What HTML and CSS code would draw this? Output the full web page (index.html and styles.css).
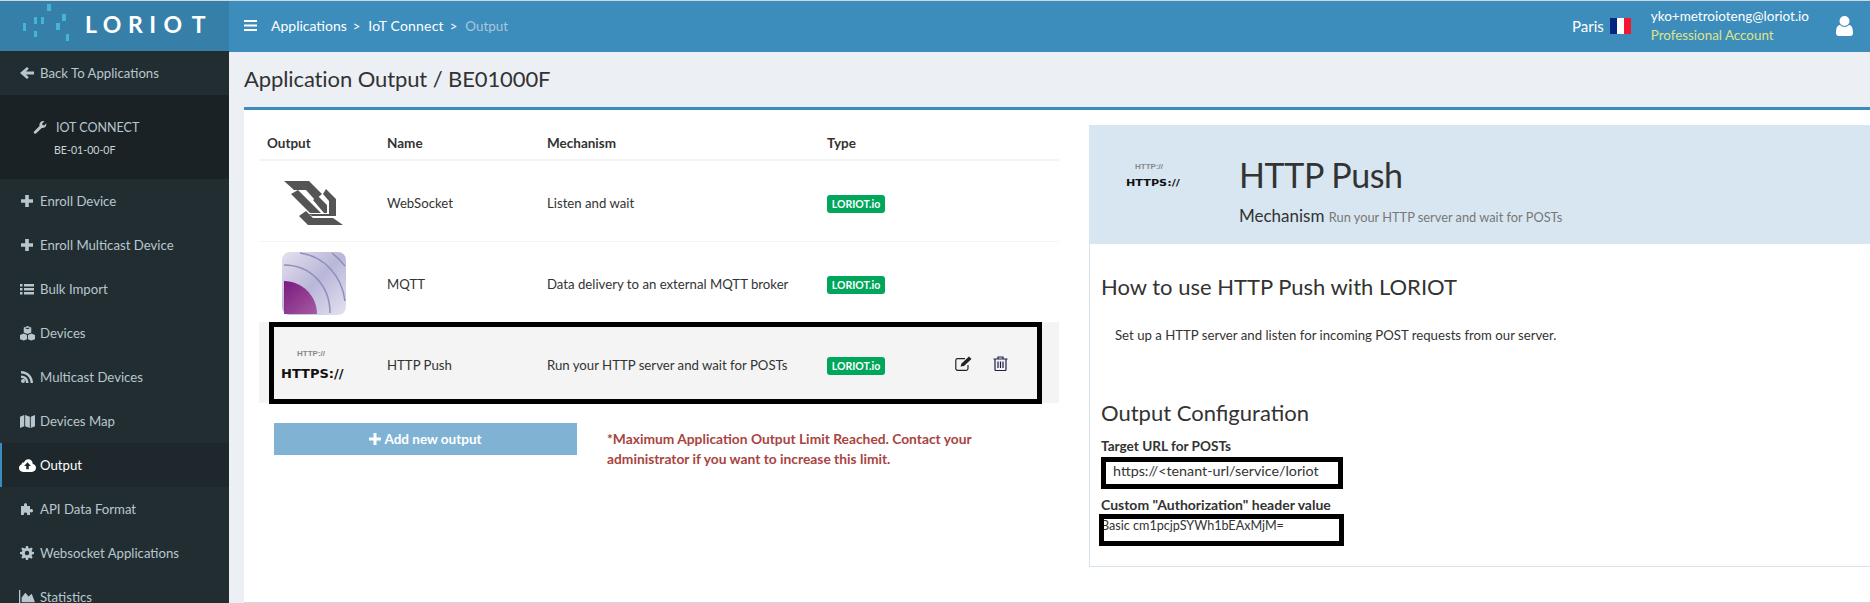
FILE: index.html
```html
<!DOCTYPE html>
<html lang="en">
<head>
	<meta charset="UTF-8">
	<title>Application Output</title>
	<link rel="stylesheet" href="styles.css">
</head>
<body>
	<header class="topbar">
		<div class="logo">
			<svg class="logo-dots" width="60" height="44" viewBox="0 0 60 44">
				<rect x="1" y="20" width="3" height="8" />
				<rect x="12" y="14" width="3" height="7" />
				<rect x="19" y="14" width="3" height="7" />
				<rect x="25" y="1" width="4" height="7" />
				<rect x="12" y="28" width="3" height="6" />
				<rect x="34" y="20" width="4" height="7" />
				<rect x="40" y="11" width="4" height="7" />
				<rect x="44" y="31" width="3" height="7" />
			</svg>
			<span class="logo-text">LORI<i>O</i><i class="logo-t">T</i></span>
		</div>
		<div class="topbar-main">
			<svg class="burger" width="13" height="11" viewBox="0 0 13 11"><path d="M0 0h13v2H0zM0 4.500h13v2H0zM0 9h13v2H0z" /></svg>
			<nav class="crumbs">
				<span>Applications</span><b>&gt;</b>
				<span class="crumb-mid">IoT Connect</span><b>&gt;</b>
				<span class="crumb-now">Output</span>
			</nav>
			<div class="region">Paris
				<svg width="21" height="16" viewBox="0 0 21 16"><rect width="7" height="16" fill="#00267f" /><rect x="7" width="7" height="16" fill="#fff" /><rect x="14" width="7" height="16" fill="#f31830" /></svg>
			</div>
			<div class="account">
				<div>yko+metroioteng@loriot.io</div>
				<div class="plan">Professional Account</div>
			</div>
			<svg class="user" width="17" height="20" viewBox="0 0 17 20"><circle cx="8.500" cy="5" r="5" /><path d="M0 17c0-6 2-8 4-8 1 1 3 2 4.500 2s3.500-1 4.500-2c2 0 4 2 4 8 0 2-1 3-3 3H3c-2 0-3-1-3-3z" /></svg>
		</div>
	</header>

	<div class="layout">
		<aside class="sidebar">
			<a class="side-back">
				<svg class="ico" viewBox="0 0 14 14"><path d="M7 1l1.800 1.800L6 5.500h8v3H6l2.800 2.700L7 13 0 7z" /></svg>
				Back To Applications
			</a>
			<div class="side-app">
				<div class="app-name">
					<svg width="14" height="14" viewBox="0 0 14 14"><path d="M1 11.500L6.500 6C6 3.500 7.500 1 10.500 1l.9.200L9.200 3.500l.3 1.600 1.600.4 2.200-2.200c.5 3-1.500 5-4.500 4.700L3 13.500c-1 .8-3-1-2-2z" /></svg>
					IOT CONNECT
				</div>
				<div class="app-id">BE-01-00-0F</div>
			</div>
			<a class="side-item">
				<svg class="ico" viewBox="0 0 14 14"><path d="M5.200 1h3.600v4.200H13v3.600H8.800V13H5.200V8.800H1V5.200h4.200z" /></svg>
				Enroll Device
			</a>
			<a class="side-item">
				<svg class="ico" viewBox="0 0 14 14"><path d="M5.200 1h3.600v4.200H13v3.600H8.800V13H5.200V8.800H1V5.200h4.200z" /></svg>
				Enroll Multicast Device
			</a>
			<a class="side-item">
				<svg class="ico" viewBox="0 0 14 14"><path d="M0 2h2.500v2.500H0zM4 2h10v2.500H4zM0 6h2.500v2.500H0zM4 6h10v2.500H4zM0 10h2.500v2.500H0zM4 10h10v2.500H4z" /></svg>
				Bulk Import
			</a>
			<a class="side-item">
				<svg class="ico ico-wide" viewBox="0 0 18 16"><path fill-rule="evenodd" d="M9 0l4 1.500V7L9 8.500 5 7V1.500zM9 2.200L7 1.500l-.3 1L9 3.400l2.300-.9-.3-1zM5 8l3.500 1.500V14L5 15.500 1 14V9.500zM13 8l4 1.500V14l-4 1.500L9.500 14V9.500z" /></svg>
				Devices
			</a>
			<a class="side-item">
				<svg class="ico" viewBox="0 0 14 14"><circle cx="3" cy="11" r="2" /><path d="M1 5.500c4.500 0 7.500 3 7.500 7.500H6c0-3-2-5-5-5zM1 1c7 0 12 5 12 12h-2.500C10.500 7.500 6.500 3.500 1 3.500z" /></svg>
				Multicast Devices
			</a>
			<a class="side-item">
				<svg class="ico ico-wide" viewBox="0 0 16 16"><path d="M0 3l4.500-2v12L0 15zM5.500 1l5 2v12l-5-2zM11.500 3L16 1v12l-4.500 2z" /></svg>
				Devices Map
			</a>
			<a class="side-item is-active">
				<svg class="ico ico-wide" viewBox="0 0 16 14"><path fill-rule="evenodd" d="M4 13C1.500 13 0 11.300 0 9.300 0 7.700 1 6.500 2.300 6 2.500 4.800 3.500 4 4.800 4 5.600 2 7 1 8.800 1c2.500 0 4.200 2 4.200 4.500 1.800.4 3 1.800 3 3.600 0 2.200-1.700 3.900-4 3.900zM8 4L4.800 7.500h2v3h2.400v-3h2z" /></svg>
				Output
			</a>
			<a class="side-item">
				<svg class="ico" viewBox="0 0 14 14"><path d="M4 4V2.500C4 .8 7 .8 7 2.500V4h3v3.500c1.500-.8 3-.3 3 1.300s-1.500 2-3 1.200V13H7c.6-1.500-.3-2.500-1.500-2.500S3.400 11.500 4 13H1V4z" /></svg>
				API Data Format
			</a>
			<a class="side-item">
				<svg class="ico" viewBox="0 0 14 14"><path fill-rule="evenodd" d="M6 0h2l.4 2 1.300.5L11.400 1.400 12.800 2.800 11.600 4.500l.5 1.300 1.900.3v2l-1.900.4-.5 1.200 1.100 1.700-1.400 1.400-1.700-1.100-1.200.5L8 14H6l-.4-1.800-1.200-.5-1.700 1.100-1.400-1.400 1.100-1.700-.5-1.200L0 8.100v-2l1.900-.3.500-1.300-1.200-1.700 1.400-1.400 1.700 1.100 1.300-.5zM7 4.800a2.200 2.200 0 1 0 0 4.400 2.200 2.200 0 0 0 0-4.400z" /></svg>
				Websocket Applications
			</a>
			<a class="side-item">
				<svg class="ico ico-wide" viewBox="0 0 16 14"><path d="M0 0h1.200v12.800H16V14H0zM2.500 11.500V7L6 2.500 9 6l3-2.500 3 8z" /></svg>
				Statistics
			</a>
		</aside>

		<main class="content">
			<h1 class="page-title">Application Output / BE01000F</h1>
			<section class="out-box">
				<div class="out-left">
					<table class="out-table">
						<thead>
							<tr>
								<th class="col-output">Output</th>
								<th class="col-name">Name</th>
								<th class="col-mech">Mechanism</th>
								<th class="col-type">Type</th>
								<th></th>
							</tr>
						</thead>
						<tbody>
							<tr>
								<td>
									<svg class="ws-logo" width="60" height="46" viewBox="8 9 60 46">
										<path d="M8 10h25l13 13-7 6-9-10H18zM15 23l7-4 23 23H34zM37 29l5-4 9 9v8h-3zM50 18l10 10v17H36l-3-2h20V30l-6-7zM23 45l7-5 7 7h20l10 7H32z" />
									</svg>
								</td>
								<td>WebSocket</td>
								<td>Listen and wait</td>
								<td><span class="badge">LORIOT.io</span></td>
								<td></td>
							</tr>
							<tr>
								<td>
									<svg class="mqtt-logo" width="64" height="63" viewBox="0 0 64 63">
										<defs>
											<linearGradient id="mqttBg" x1="0" y1="0" x2="1" y2="1">
												<stop offset="0" stop-color="#e6e0ef" />
												<stop offset="0.5" stop-color="#b9b7d8" />
												<stop offset="1" stop-color="#e4e2f0" />
											</linearGradient>
											<linearGradient id="mqttDot" x1="0" y1="0" x2="1" y2="1">
												<stop offset="0" stop-color="#7a1a80" />
												<stop offset="1" stop-color="#a65aa0" />
											</linearGradient>
										</defs>
										<rect width="64" height="63" rx="8" fill="url(#mqttBg)" />
										<path d="M2 29c18 0 33 15 33 33H2z" fill="url(#mqttDot)" />
										<path d="M2 13c27 0 46 21 46 48M18 1c24 3 42 23 45 48M50 1c4 3 9 8 13 13" fill="none" stroke="#8e8fbd" stroke-width="1.500" />
									</svg>
								</td>
								<td>MQTT</td>
								<td>Data delivery to an external MQTT broker</td>
								<td><span class="badge">LORIOT.io</span></td>
								<td></td>
							</tr>
							<tr class="row-on">
								<td>
									<div class="http-logo">
										<div class="http-small">HTTP://</div>
										<div class="http-big">HTTPS://</div>
									</div>
								</td>
								<td>HTTP Push</td>
								<td>Run your HTTP server and wait for POSTs</td>
								<td><span class="badge">LORIOT.io</span></td>
								<td class="row-tools">
									<svg width="19" height="15" viewBox="0 0 19 15" fill="none" stroke="#222" stroke-width="1.200"><path d="M13 9v3.500a1.800 1.800 0 0 1-1.800 1.800H2.600A1.800 1.800 0 0 1 .8 12.500V4.400a1.800 1.800 0 0 1 1.800-1.800H10" /><path d="M5.500 10.500l1-3L14 .5l2.500 2.500-7.500 7z" fill="#222" stroke="none" /></svg>
									<svg width="15" height="15" viewBox="0 0 15 15" fill="none" stroke="#1d1d4a" stroke-width="1.200"><path d="M.5 3h14M5 3V1h5v2M2 3v10.500c0 .6.400 1 1 1h9c.6 0 1-.4 1-1V3M5 5.500v6.500M7.500 5.500v6.500M10 5.500v6.500" /></svg>
								</td>
							</tr>
						</tbody>
					</table>
					<div class="mark-row"></div>
					<div class="out-actions">
						<a class="btn-add">
							<svg width="12" height="12" viewBox="0 0 12 12"><path d="M4.500 0h3v4.500H12v3H7.500V12h-3V7.500H0v-3h4.500z" /></svg>
							Add new output
						</a>
						<p class="limit-note">*Maximum Application Output Limit Reached. Contact your administrator if you want to increase this limit.</p>
					</div>
				</div>

				<div class="out-panel">
					<div class="panel-head">
						<div class="panel-logo">
							<div class="http-small">HTTP://</div>
							<div class="http-big">HTTPS://</div>
						</div>
						<div>
							<h2>HTTP Push</h2>
							<p class="panel-mech">Mechanism <small>Run your HTTP server and wait for POSTs</small></p>
						</div>
					</div>
					<div class="panel-body">
						<h3>How to use HTTP Push with LORIOT</h3>
						<p class="panel-text">Set up a HTTP server and listen for incoming POST requests from our server.</p>
						<h3 class="conf-title">Output Configuration</h3>
						<label>Target URL for POSTs</label>
						<div class="field field-url">https://&lt;tenant-url/service/loriot</div>
						<label class="label-auth">Custom "Authorization" header value</label>
						<div class="field field-auth"><span>Basic cm1pcjpSYWh1bEAxMjM=</span></div>
					</div>
				</div>
			</section>
		</main>
	</div>
</body>
</html>
```

FILE: styles.css
```css
body{ margin: 0; height: 603px; overflow: hidden; background: #ecf0f5; color: #333; font-family: "Lato", "Liberation Sans", sans-serif; font-size: 13.200px; border-top: 1px solid #d2d6de; box-sizing: border-box; }
h1,h2,h3,p{ margin: 0; font-weight: normal; }

/* top bar */
.topbar{ display: flex; height: 51px; background: #3c8dbc; color: #fff; }
.logo{ width: 229px; background: #367fa9; display: flex; align-items: flex-start; flex-shrink: 0; }
.logo-dots{ margin: 2px 0 0 22px; fill: #45b5d6; }
.logo-text{ font-size: 23px; font-weight: bold; letter-spacing: 6.500px; margin: 7px 0 0 3px; line-height: 32px; white-space: nowrap; }
.logo-text i{ font-style: normal; margin-left: 1px; }
.logo-text .logo-t{ margin-left: 3px; }
.topbar-main{ flex: 1; display: flex; align-items: center; padding: 0 17px 2px 15px; }
.burger{ fill: #fff; margin-right: 14px; }
.crumbs{ flex: 1; display: flex; align-items: center; font-size: 14px; }
.crumbs b{ font-weight: normal; margin: 0 8px 0 6px; font-size: 13px; }
.crumb-mid{ letter-spacing: .2px; }
.crumb-now{ color: #a9c6db; font-size: 13.400px; }
.region{ display: flex; align-items: center; gap: 6px; font-size: 15px; margin-right: 20px; }
.account{ font-size: 13.500px; line-height: 19px; margin-right: 27px; }
.plan{ color: #dfe38a; font-size: 13.400px; }
.user{ fill: #fff; }

/* sidebar */
.layout{ display: flex; height: 551px; }
.sidebar{ width: 229px; flex-shrink: 0; background: #222d32; color: #b8c7ce; overflow: hidden; margin-top: -1px; }
.side-back{ display: flex; align-items: center; height: 44px; gap: 6px; padding-left: 20px; }
.side-item{ display: flex; align-items: center; height: 44px; gap: 6px; padding-left: 20px; }
.side-item.is-active{ background: #1e282c; color: #fff; border-left: 2px solid #3c8dbc; padding-left: 18px; }
.ico{ width: 14px; height: 14px; fill: currentColor; flex-shrink: 0; }
.ico-wide{ width: 17px; height: 15px; margin: 0 -1.500px; }
.side-app{ background: #1a2226; height: 84px; box-sizing: border-box; padding-top: 21px; }
.app-name{ display: flex; align-items: center; gap: 9px; padding-left: 33px; height: 22px; font-size: 12.500px; }
.app-name svg{ fill: #b8c7ce; }
.app-id{ font-size: 10.600px; color: #c8d4da; padding: 6px 0 0 54px; }

/* content */
.content{ flex: 1; min-width: 0; padding-left: 15px; }
.page-title{ font-size: 22px; letter-spacing: -.1px; color: #333; height: 55px; line-height: 53px; }
.out-box{ display: flex; background: #fff; border-top: 3px solid #3c8dbc; border-bottom: 1px solid #d2d6de; height: 496px; box-sizing: border-box; padding-top: 15px; }
.out-left{ width: 800px; margin: 0 30px 0 15px; flex-shrink: 0; position: relative; }
.out-table{ width: 800px; border-collapse: collapse; table-layout: fixed; }
.out-table th{ text-align: left; font-weight: bold; height: 32px; padding: 2px 8px 0; border-bottom: 2px solid #f4f4f4; font-size: 13.500px; }
.out-table td{ height: 81px; padding: 4px 8px 0; border-top: 1px solid #f4f4f4; vertical-align: middle; box-sizing: border-box; }
.out-table tbody tr:first-child td{ border-top: 0; }
.col-output{ width: 104px; }
.col-name{ width: 144px; }
.col-mech{ width: 264px; }
.col-type{ width: 112px; }
.ws-logo{ display: block; margin-left: 17px; fill: #555; }
.mqtt-logo{ display: block; margin-left: 15px; }
.row-on td{ background: #f4f4f4; }
.http-logo{ margin-left: 14px; width: 60px; text-align: center; padding-top: 1px; }
.http-small{ font-size: 8px; font-weight: bold; color: #888; font-family: "Liberation Sans", sans-serif; }
.http-big{ font-size: 13px; font-weight: bold; color: #111; font-family: "DejaVu Sans", sans-serif; margin-top: 8px; }
.badge{ display: inline-block; background: #00a65a; color: #fff; font-size: 10.500px; font-weight: bold; width: 58px; height: 18px; line-height: 18px; margin-top: 3px; text-align: center; border-radius: 3px; }
.out-table td.row-tools{ padding-top: 0; }
.row-tools svg{ margin-right: 16px; vertical-align: middle; }
.mark-row{ position: absolute; left: 10px; top: 197px; width: 773px; height: 82px; border: 5px solid #000; box-sizing: border-box; }
.out-actions{ display: flex; margin: 20px 0 0 15px; gap: 30px; }
.btn-add{ width: 303px; height: 32px; background: #80b3d3; color: #fff; font-weight: bold; font-size: 13.500px; display: flex; align-items: center; justify-content: center; gap: 3px; flex-shrink: 0; }
.btn-add svg{ fill: #fff; }
.limit-note{ color: #a94442; font-weight: bold; font-size: 13.800px; line-height: 20px; width: 390px; padding-top: 6px; }

/* right panel */
.out-panel{ flex: 1; align-self: flex-start; height: 442px; box-sizing: border-box; border-left: 1px solid #d6e4ef; border-bottom: 1px solid #d6e4ef; }
.panel-head{ height: 119px; background: #d7e6f1; margin-left: -1px; display: flex; padding-top: 28px; box-sizing: border-box; }
.panel-logo{ width: 150px; padding-left: 30px; box-sizing: border-box; margin-top: 9px; text-align: left; }
.panel-logo .http-small{ font-size: 8px; margin-left: 16px; }
.panel-logo .http-big{ font-size: 8px; transform: scaleX(1.400); transform-origin: left; margin-top: 8px; margin-left: 7px; }
.panel-head h2{ font-size: 34px; letter-spacing: -.4px; line-height: 44px; }
.panel-mech{ font-size: 17px; margin-top: 7px; line-height: 24px; }
.panel-mech small{ font-size: 12.800px; color: #777; }
.panel-body{ padding: 29px 0 0 11px; }
.panel-body h3{ font-size: 22px; line-height: 28px; }
.panel-text{ margin: 24px 0 0 14px; line-height: 20px; }
.conf-title{ margin-top: 54px; }
label{ display: block; font-weight: bold; font-size: 13.600px; margin-top: 10px; line-height: 18px; }
.field{ border: 5px solid #000; box-sizing: border-box; height: 32px; }
.field-url{ width: 242px; margin-top: 2px; padding-left: 7px; line-height: 18px; font-size: 14.300px; }
.label-auth{ margin-top: 7px; font-size: 14px; }
.field-auth{ width: 245px; margin: 0 0 0 -2px; overflow: hidden; line-height: 13px; font-size: 12.600px; }
.field-auth span{ margin-left: -3px; white-space: nowrap; }
```
